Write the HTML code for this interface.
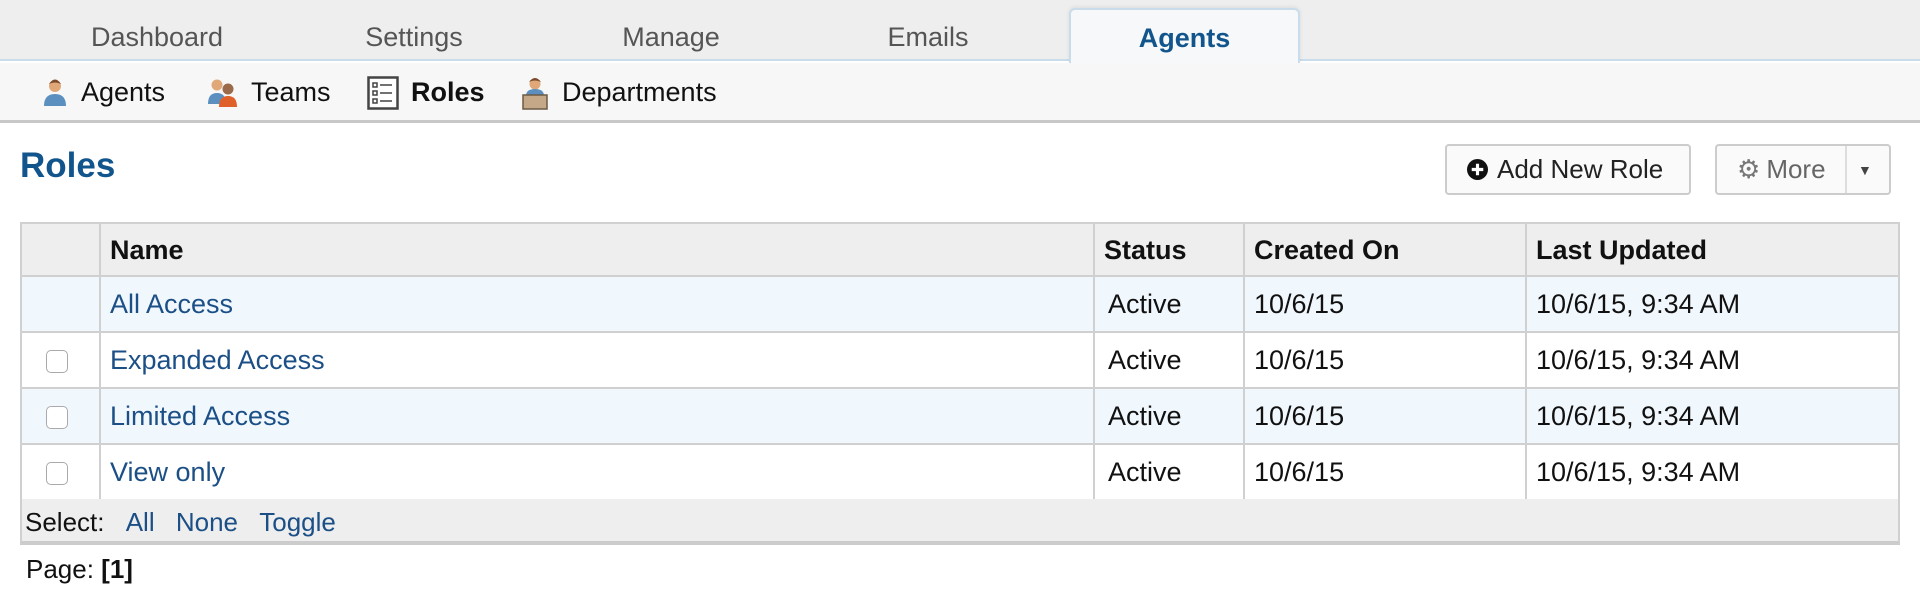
<!DOCTYPE html>
<html><head><style>
*{box-sizing:border-box;margin:0;padding:0}
body{width:1920px;height:610px;background:#fff;font-family:"Liberation Sans",sans-serif;color:#111;position:relative;overflow:hidden}
.tabs{position:absolute;left:0;top:0;width:1920px;height:61px;background:#eee;border-bottom:2px solid #c9dcec}
.tab{position:absolute;top:22px;font-size:27px;color:#555;transform:translateX(-50%);white-space:nowrap}
.active{position:absolute;left:1069px;top:8px;width:231px;height:55px;background:#f7f8fa;border:2px solid #c9dcec;border-bottom:none;border-radius:6px 6px 0 0;box-shadow:0 -1px 4px rgba(0,0,0,.08);text-align:center;padding-top:13px;font-size:27px;font-weight:bold;color:#12558c}
.sub{position:absolute;left:0;top:63px;width:1920px;height:60px;background:#f7f7f7;border-bottom:3px solid #c8c8c8}
.si{position:absolute;top:14px;font-size:27px;color:#111;white-space:nowrap}
.ic{position:absolute;top:13px}
h1{position:absolute;left:20px;top:146px;font-size:35px;color:#12558c;font-weight:bold}
.btn{position:absolute;top:144px;height:51px;border:2px solid #ccc;border-radius:4px;background:#fafafa;font-size:26px;color:#222;display:flex;align-items:center}
table{position:absolute;left:20px;top:222px;width:1880px;border-collapse:collapse;font-size:27px}
td,th{border:2px solid #d0d0d0;text-align:left;padding:0 0 0 9px}
th{background:#eee;height:53px;font-weight:bold;padding-top:2px}
td{height:56px}
tr.alt td{background:#f1f8fd}
a{color:#1b4f86;text-decoration:none}
.cb{display:inline-block;width:22px;height:23px;border:1.5px solid #aaa;border-radius:5px;background:#fff;margin-left:24px;vertical-align:middle}
.foot{position:absolute;left:20px;top:499px;width:1880px;height:46px;background:#eee;border-left:2px solid #d0d0d0;border-right:2px solid #d0d0d0;border-bottom:4px solid #ccc;font-size:26px;padding:8px 0 0 3px}
.foot a{margin-left:14px}
.page{position:absolute;left:26px;top:554px;font-size:26px}
</style></head><body>
<div class="tabs">
<div class="tab" style="left:157px">Dashboard</div>
<div class="tab" style="left:414px">Settings</div>
<div class="tab" style="left:671px">Manage</div>
<div class="tab" style="left:928px">Emails</div>
<div class="active">Agents</div>
</div>
<div class="sub">
<svg class="ic" style="left:40px" width="30" height="32" viewBox="0 0 30 32"><circle cx="15" cy="10" r="6" fill="#e0a878"/><path d="M9 8q6-9 12 0q-6-3-12 0z" fill="#7a4a2a"/><path d="M4 30q0-12 11-12q11 0 11 12z" fill="#5b8fbf"/></svg>
<div class="si" style="left:81px">Agents</div>
<svg class="ic" style="left:206px" width="34" height="32" viewBox="0 0 34 32"><circle cx="11" cy="9" r="5.5" fill="#e0a878"/><path d="M2 28q0-11 9-11q9 0 9 11z" fill="#5b8fbf"/><circle cx="22" cy="13" r="5.5" fill="#9a6a4a"/><path d="M13 31q0-11 9-11q9 0 9 11z" fill="#e0602a"/></svg>
<div class="si" style="left:251px">Teams</div>
<svg class="ic" style="left:367px" width="32" height="34" viewBox="0 0 32 34"><rect x="1.5" y="1.5" width="29" height="31" fill="#fff" stroke="#444" stroke-width="2.5"/><g stroke="#444" stroke-width="1.5" fill="none"><rect x="6" y="7" width="4" height="4"/><rect x="6" y="15" width="4" height="4"/><rect x="6" y="23" width="4" height="4"/><path d="M13 9h12M13 17h12M13 25h12"/></g></svg>
<div class="si" style="left:411px;font-weight:bold">Roles</div>
<svg class="ic" style="left:520px" width="30" height="34" viewBox="0 0 30 34"><circle cx="15" cy="8" r="5.5" fill="#e0a878"/><path d="M9 6q6-8 12 0q-6-3-12 0z" fill="#7a4a2a"/><path d="M6 20q0-7 9-7q9 0 9 7z" fill="#5b8fbf"/><rect x="3" y="19" width="24" height="14" fill="#c4a887" stroke="#6b5a45" stroke-width="1.5"/></svg>
<div class="si" style="left:562px">Departments</div>
</div>
<h1>Roles</h1>
<div class="btn" style="left:1445px;width:246px;padding-left:20px"><svg width="21" height="21" viewBox="0 0 20 20" style="margin-right:9px"><circle cx="10" cy="10" r="10" fill="#111"/><path d="M10 4.5v11M4.5 10h11" stroke="#fff" stroke-width="3"/></svg>Add New Role</div>
<div class="btn" style="left:1715px;width:176px;padding-left:20px;color:#666"><span style="color:#777;margin-right:6px">⚙</span>More<span style="position:absolute;left:128px;top:0;bottom:0;border-left:2px solid #ddd"></span><span style="position:absolute;left:141px;top:16px;font-size:14px;color:#444">▼</span></div>
<table>
<tr><th style="width:79px"></th><th style="width:994px">Name</th><th style="width:150px">Status</th><th style="width:282px">Created On</th><th>Last Updated</th></tr>
<tr class="alt"><td></td><td><a>All Access</a></td><td style="padding-left:13px">Active</td><td>10/6/15</td><td>10/6/15, 9:34 AM</td></tr>
<tr><td style="padding:0"><span class="cb"></span></td><td><a>Expanded Access</a></td><td style="padding-left:13px">Active</td><td>10/6/15</td><td>10/6/15, 9:34 AM</td></tr>
<tr class="alt"><td style="padding:0"><span class="cb"></span></td><td><a>Limited Access</a></td><td style="padding-left:13px">Active</td><td>10/6/15</td><td>10/6/15, 9:34 AM</td></tr>
<tr><td style="padding:0"><span class="cb"></span></td><td><a>View only</a></td><td style="padding-left:13px">Active</td><td>10/6/15</td><td>10/6/15, 9:34 AM</td></tr>
</table>
<div class="foot">Select: <a>All</a> <a>None</a> <a>Toggle</a></div>
<div class="page">Page: <b>[1]</b></div>
</body></html>
